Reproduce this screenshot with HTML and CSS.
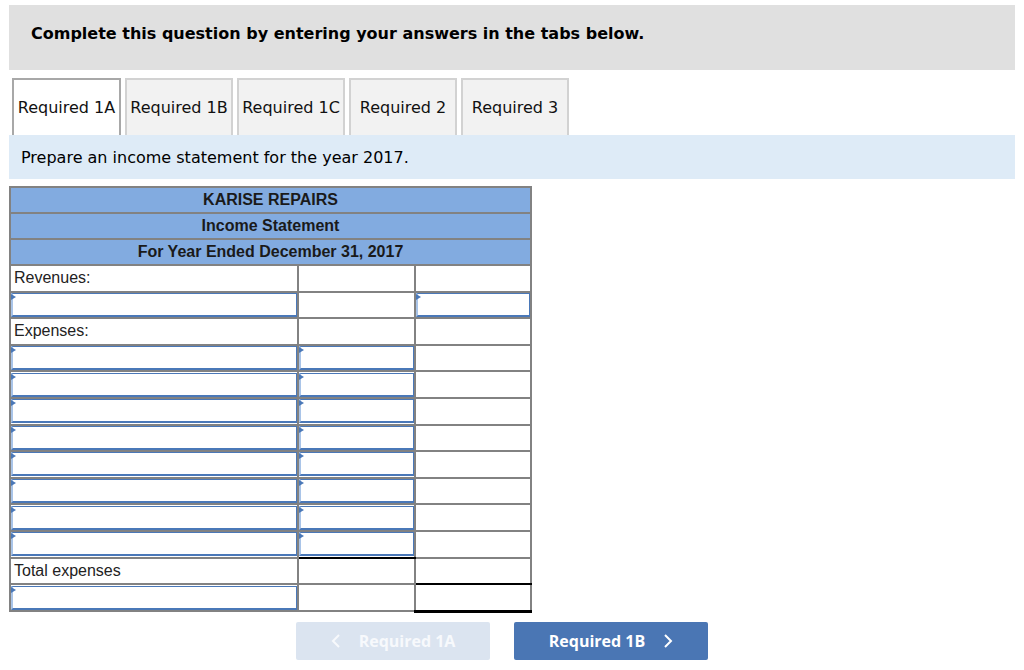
FILE: index.html
```html
<!DOCTYPE html>
<html>
<head>
<meta charset="utf-8">
<link rel="stylesheet" href="styles.css">
</head>
<body>
<div class="page">
  <div class="banner">Complete this question by entering your answers in the tabs below.</div>
  <div class="tabs">
    <div class="tab active">Required 1A</div>
    <div class="tab">Required 1B</div>
    <div class="tab">Required 1C</div>
    <div class="tab">Required 2</div>
    <div class="tab">Required 3</div>
  </div>
  <div class="instr">Prepare an income statement for the year 2017.</div>
  <table class="stmt">
    <colgroup><col class="c1"><col class="c2"><col class="c3"></colgroup>
    <tr class="hd"><th colspan="3">KARISE REPAIRS</th></tr>
    <tr class="hd"><th colspan="3">Income Statement</th></tr>
    <tr class="hd"><th colspan="3">For Year Ended December 31, 2017</th></tr>
    <tr><td class="lbl">Revenues:</td><td></td><td></td></tr>
    <tr><td class="in"><div class="box"></div></td><td></td><td class="in"><div class="box"></div></td></tr>
    <tr><td class="lbl">Expenses:</td><td></td><td></td></tr>
    <tr><td class="in"><div class="box"></div></td><td class="in"><div class="box"></div></td><td></td></tr>
    <tr><td class="in"><div class="box"></div></td><td class="in"><div class="box"></div></td><td></td></tr>
    <tr><td class="in"><div class="box"></div></td><td class="in"><div class="box"></div></td><td></td></tr>
    <tr><td class="in"><div class="box"></div></td><td class="in"><div class="box"></div></td><td></td></tr>
    <tr><td class="in"><div class="box"></div></td><td class="in"><div class="box"></div></td><td></td></tr>
    <tr><td class="in"><div class="box"></div></td><td class="in"><div class="box"></div></td><td></td></tr>
    <tr><td class="in"><div class="box"></div></td><td class="in"><div class="box"></div></td><td></td></tr>
    <tr><td class="in"><div class="box"></div></td><td class="in sum"><div class="box"></div></td><td></td></tr>
    <tr><td class="lbl">Total expenses</td><td></td><td class="sum"></td></tr>
    <tr><td class="in"><div class="box"></div></td><td></td><td class="dbl"></td></tr>
  </table>
  <div class="nav">
    <button class="btn prev"><svg width="10" height="16" viewBox="0 0 10 16"><path d="M8 2 L2 8 L8 14" fill="none" stroke="currentColor" stroke-width="2"/></svg><span>Required 1A</span></button>
    <button class="btn next"><span>Required 1B</span><svg width="10" height="16" viewBox="0 0 10 16"><path d="M2 2 L8 8 L2 14" fill="none" stroke="currentColor" stroke-width="2"/></svg></button>
  </div>
</div>
</body>
</html>
```

FILE: styles.css
```css
html, body { margin: 0; padding: 0; background: #fff; }
.page { padding: 5px 9px 0 9px; font-family: "DejaVu Sans", Verdana, sans-serif; color: #000; }
.banner {
  background: #e0e0e0;
  height: 65px;
  box-sizing: border-box;
  padding: 19px 0 0 22px;
  font-weight: bold;
  font-size: 16px;
  line-height: 20px;
}
.tabs { display: flex; gap: 4px; padding: 8px 0 0 3px; height: 57px; }
.tab {
  background: #f2f2f2;
  border: 2px solid #d2d2d2;
  border-bottom: none;
  width: 104px;
  display: flex;
  align-items: center;
  justify-content: center;
  font-size: 16px;
  color: #111;
  white-space: nowrap;
}
.tab.active { background: #fff; border-color: #a8a8a8; width: 105px; }
.instr {
  background: #deebf7;
  height: 44px;
  display: flex;
  align-items: center;
  padding-left: 12px;
  font-size: 16px;
}
.stmt {
  margin-top: 7px;
  border-collapse: collapse;
  table-layout: fixed;
  width: 521px;
  font-family: "Liberation Sans", Arial, sans-serif;
  font-size: 16px;
}
.c1 { width: 288px; }
.c2 { width: 117px; }
.c3 { width: 116px; }
.stmt th {
  background: #82abe0;
  border: 2px solid #828282;
  height: 24px;
  padding: 0;
  font-weight: bold;
  color: #1a1a1a;
  text-align: center;
  line-height: 18px;
  vertical-align: middle;
}
.stmt td {
  border: 2px solid #828282;
  height: 24.6px;
  padding: 0;
  color: #222;
  line-height: 18px;
  vertical-align: middle;
}
.stmt td.lbl { padding-left: 3px; }
.box {
  height: 21px;
  border: 1px solid #4a78b8;
  border-left: 2px solid #a9c4e8;
  border-bottom: 2px solid #4a78b8;
  position: relative;
}
.box::before {
  content: "";
  position: absolute;
  left: -2px;
  top: 0;
  border-left: 5px solid #4a78b8;
  border-top: 3px solid transparent;
  border-bottom: 3px solid transparent;
}
.stmt td.sum { border-bottom: 2px solid #000; }
.stmt td.dbl { border-top: 2px solid #000; border-bottom: 3px solid #000; }
.nav { display: flex; justify-content: center; gap: 24px; margin-top: 9px; padding-right: 20px; }
.btn {
  width: 194px;
  height: 38px;
  border: none;
  border-radius: 2px;
  font-family: "Open Sans", "Liberation Sans", sans-serif;
  font-weight: bold;
  font-size: 16px;
  display: flex;
  align-items: center;
  justify-content: center;
  gap: 18px;
  padding: 0;
}
.btn.prev { background: #dbe4f0; color: #f7f9fc; }
.btn.next { background: #4a76b4; color: #fff; }
```
